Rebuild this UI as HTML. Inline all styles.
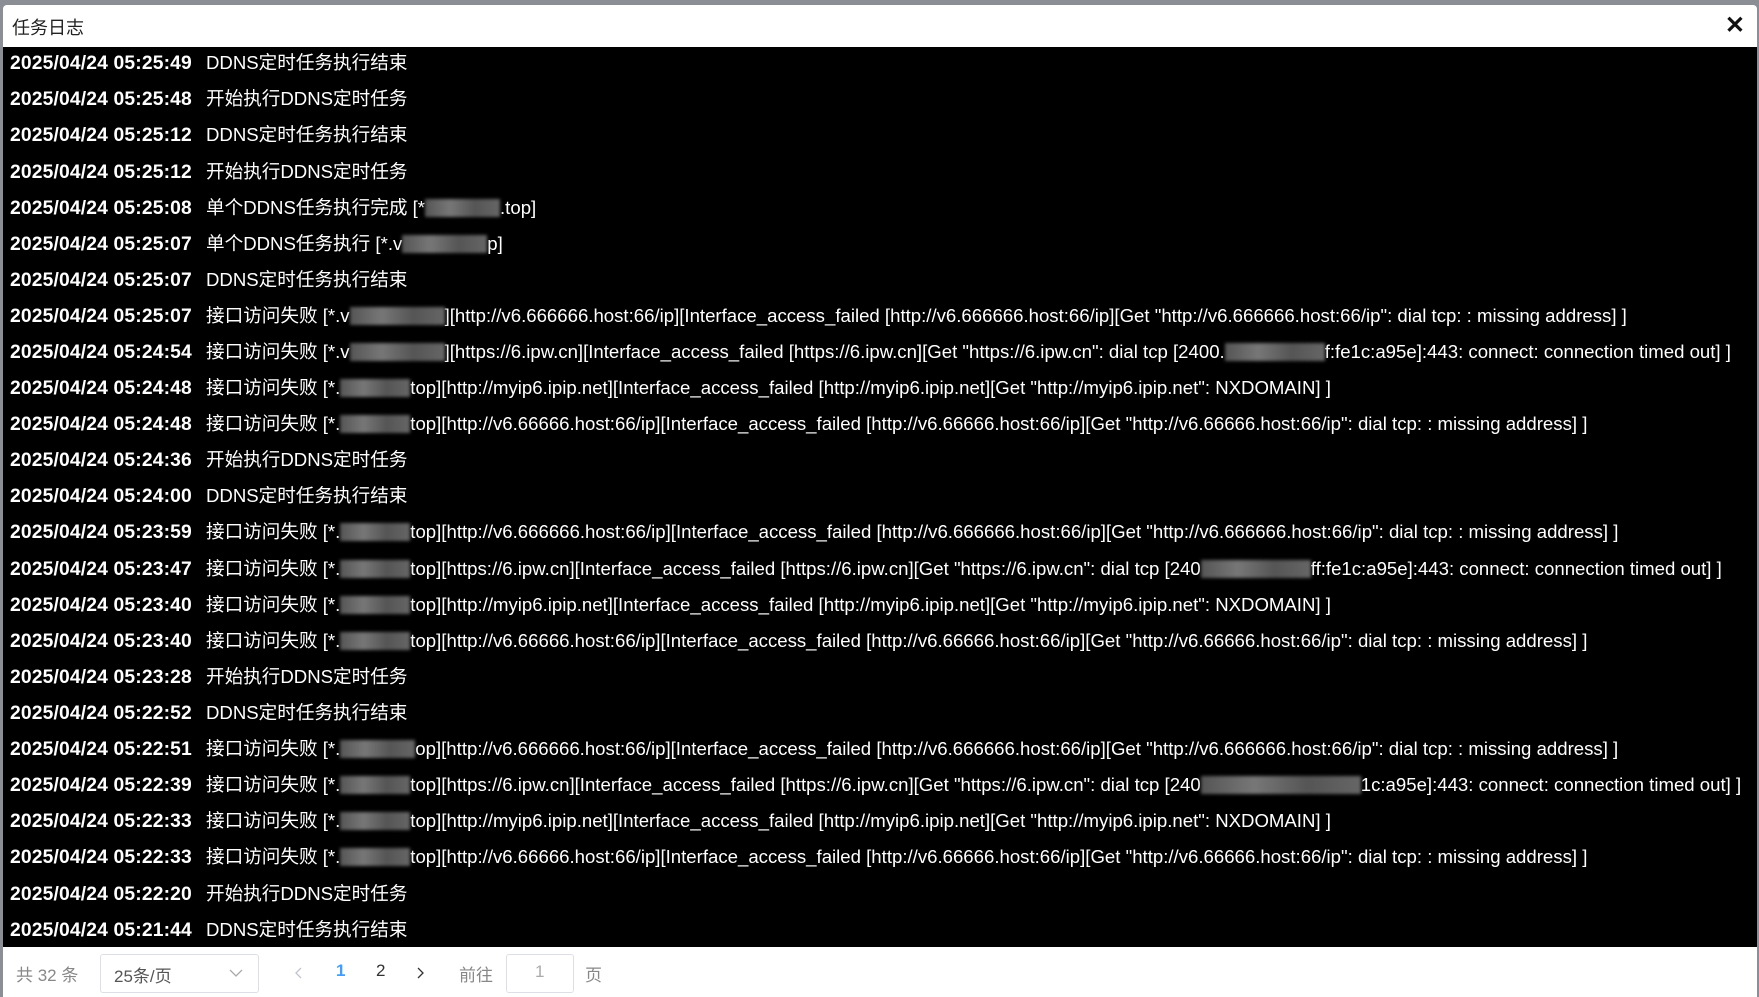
<!DOCTYPE html>
<html><head><meta charset="utf-8"><style>
html,body{margin:0;padding:0;width:1759px;height:997px;overflow:hidden;background:#8b8e94;font-family:"Liberation Sans","Noto Sans CJK SC",sans-serif}
.dlg{position:absolute;left:3px;top:5px;width:1754px;height:992px;background:#fff;border-radius:4px 4px 0 0;overflow:hidden}
.hd{position:absolute;left:0;top:0;right:0;height:42px}
.hd .t{position:absolute;left:9px;top:9px;font-size:18px;color:#222}
.hd .x{position:absolute;right:12px;top:6px;font-size:24px;color:#111;font-weight:bold}
.bd{position:absolute;left:0;top:42px;right:0;height:900px;background:#000}
.r{position:absolute;left:7px;white-space:nowrap;font-size:18.6px;color:#fff;line-height:22px;margin-top:-4px}
.r b{display:inline-block;width:196px;font-size:19.3px;letter-spacing:0.15px}
.bl{display:inline-block;height:18px;vertical-align:-3px;background:linear-gradient(90deg,#555,#777,#555,#666);filter:blur(1.5px)}
.ft{position:absolute;left:0;top:942px;right:0;height:50px;font-size:17px;color:#888}
.a{position:absolute;top:14px;white-space:nowrap}
.sel{position:absolute;left:97px;top:7px;width:159px;height:39px;border:1px solid #dcdfe6;border-radius:3px;box-sizing:border-box}
.inp{position:absolute;left:503px;top:7px;width:68px;height:39px;border:1px solid #dcdfe6;border-radius:3px;box-sizing:border-box}
.in{position:absolute;top:7px;white-space:nowrap}
</style></head><body>
<div class="dlg">
<div class="hd"><div class="t">任务日志</div><div class="x">✕</div></div>
<div class="bd" id="bd">
<div class="r" style="top:9px"><b>2025/04/24 05:25:49</b>DDNS定时任务执行结束</div>
<div class="r" style="top:45px"><b>2025/04/24 05:25:48</b>开始执行DDNS定时任务</div>
<div class="r" style="top:81px"><b>2025/04/24 05:25:12</b>DDNS定时任务执行结束</div>
<div class="r" style="top:118px"><b>2025/04/24 05:25:12</b>开始执行DDNS定时任务</div>
<div class="r" style="top:154px"><b>2025/04/24 05:25:08</b>单个DDNS任务执行完成 [*<span class="bl" style="width:75px"></span>.top]</div>
<div class="r" style="top:190px"><b>2025/04/24 05:25:07</b>单个DDNS任务执行 [*.v<span class="bl" style="width:85px"></span>p]</div>
<div class="r" style="top:226px"><b>2025/04/24 05:25:07</b>DDNS定时任务执行结束</div>
<div class="r" style="top:262px"><b>2025/04/24 05:25:07</b>接口访问失败 [*.v<span class="bl" style="width:95px"></span>][http://v6.666666.host:66/ip][Interface_access_failed [http://v6.666666.host:66/ip][Get "http://v6.666666.host:66/ip": dial tcp: : missing address] ]</div>
<div class="r" style="top:298px"><b>2025/04/24 05:24:54</b>接口访问失败 [*.v<span class="bl" style="width:95px"></span>][https://6.ipw.cn][Interface_access_failed [https://6.ipw.cn][Get "https://6.ipw.cn": dial tcp [2400.<span class="bl" style="width:100px"></span>f:fe1c:a95e]:443: connect: connection timed out] ]</div>
<div class="r" style="top:334px"><b>2025/04/24 05:24:48</b>接口访问失败 [*.<span class="bl" style="width:70px"></span>top][http://myip6.ipip.net][Interface_access_failed [http://myip6.ipip.net][Get "http://myip6.ipip.net": NXDOMAIN] ]</div>
<div class="r" style="top:370px"><b>2025/04/24 05:24:48</b>接口访问失败 [*.<span class="bl" style="width:70px"></span>top][http://v6.66666.host:66/ip][Interface_access_failed [http://v6.66666.host:66/ip][Get "http://v6.66666.host:66/ip": dial tcp: : missing address] ]</div>
<div class="r" style="top:406px"><b>2025/04/24 05:24:36</b>开始执行DDNS定时任务</div>
<div class="r" style="top:442px"><b>2025/04/24 05:24:00</b>DDNS定时任务执行结束</div>
<div class="r" style="top:478px"><b>2025/04/24 05:23:59</b>接口访问失败 [*.<span class="bl" style="width:70px"></span>top][http://v6.666666.host:66/ip][Interface_access_failed [http://v6.666666.host:66/ip][Get "http://v6.666666.host:66/ip": dial tcp: : missing address] ]</div>
<div class="r" style="top:515px"><b>2025/04/24 05:23:47</b>接口访问失败 [*.<span class="bl" style="width:70px"></span>top][https://6.ipw.cn][Interface_access_failed [https://6.ipw.cn][Get "https://6.ipw.cn": dial tcp [240<span class="bl" style="width:110px"></span>ff:fe1c:a95e]:443: connect: connection timed out] ]</div>
<div class="r" style="top:551px"><b>2025/04/24 05:23:40</b>接口访问失败 [*.<span class="bl" style="width:70px"></span>top][http://myip6.ipip.net][Interface_access_failed [http://myip6.ipip.net][Get "http://myip6.ipip.net": NXDOMAIN] ]</div>
<div class="r" style="top:587px"><b>2025/04/24 05:23:40</b>接口访问失败 [*.<span class="bl" style="width:70px"></span>top][http://v6.66666.host:66/ip][Interface_access_failed [http://v6.66666.host:66/ip][Get "http://v6.66666.host:66/ip": dial tcp: : missing address] ]</div>
<div class="r" style="top:623px"><b>2025/04/24 05:23:28</b>开始执行DDNS定时任务</div>
<div class="r" style="top:659px"><b>2025/04/24 05:22:52</b>DDNS定时任务执行结束</div>
<div class="r" style="top:695px"><b>2025/04/24 05:22:51</b>接口访问失败 [*.<span class="bl" style="width:75px"></span>op][http://v6.666666.host:66/ip][Interface_access_failed [http://v6.666666.host:66/ip][Get "http://v6.666666.host:66/ip": dial tcp: : missing address] ]</div>
<div class="r" style="top:731px"><b>2025/04/24 05:22:39</b>接口访问失败 [*.<span class="bl" style="width:70px"></span>top][https://6.ipw.cn][Interface_access_failed [https://6.ipw.cn][Get "https://6.ipw.cn": dial tcp [240<span class="bl" style="width:160px"></span>1c:a95e]:443: connect: connection timed out] ]</div>
<div class="r" style="top:767px"><b>2025/04/24 05:22:33</b>接口访问失败 [*.<span class="bl" style="width:70px"></span>top][http://myip6.ipip.net][Interface_access_failed [http://myip6.ipip.net][Get "http://myip6.ipip.net": NXDOMAIN] ]</div>
<div class="r" style="top:803px"><b>2025/04/24 05:22:33</b>接口访问失败 [*.<span class="bl" style="width:70px"></span>top][http://v6.66666.host:66/ip][Interface_access_failed [http://v6.66666.host:66/ip][Get "http://v6.66666.host:66/ip": dial tcp: : missing address] ]</div>
<div class="r" style="top:840px"><b>2025/04/24 05:22:20</b>开始执行DDNS定时任务</div>
<div class="r" style="top:876px"><b>2025/04/24 05:21:44</b>DDNS定时任务执行结束</div>
</div>
<div class="ft">
<span class="a" style="left:13px">共 32 条</span>
<div class="sel"><span class="in" style="left:13px;color:#555">25条/页</span><svg style="position:absolute;left:128px;top:14px" width="14" height="9" viewBox="0 0 14 9"><path d="M1 1 L7 7 L13 1" fill="none" stroke="#aaa" stroke-width="1.3"/></svg></div>
<svg style="position:absolute;left:292px;top:20px" width="8" height="12" viewBox="0 0 8 12"><path d="M6 1 L1 6 L6 11" fill="none" stroke="#c0c4cc" stroke-width="1.3"/></svg>
<span class="a" style="left:333px;color:#409eff;font-weight:bold">1</span>
<span class="a" style="left:373px;color:#333">2</span>
<svg style="position:absolute;left:413px;top:20px" width="8" height="12" viewBox="0 0 8 12"><path d="M2 1 L7 6 L2 11" fill="none" stroke="#333" stroke-width="1.3"/></svg>
<span class="a" style="left:456px">前往</span>
<div class="inp"><span class="in" style="left:28px;color:#aaa">1</span></div>
<span class="a" style="left:582px">页</span>
</div>
</div>
</body></html>
